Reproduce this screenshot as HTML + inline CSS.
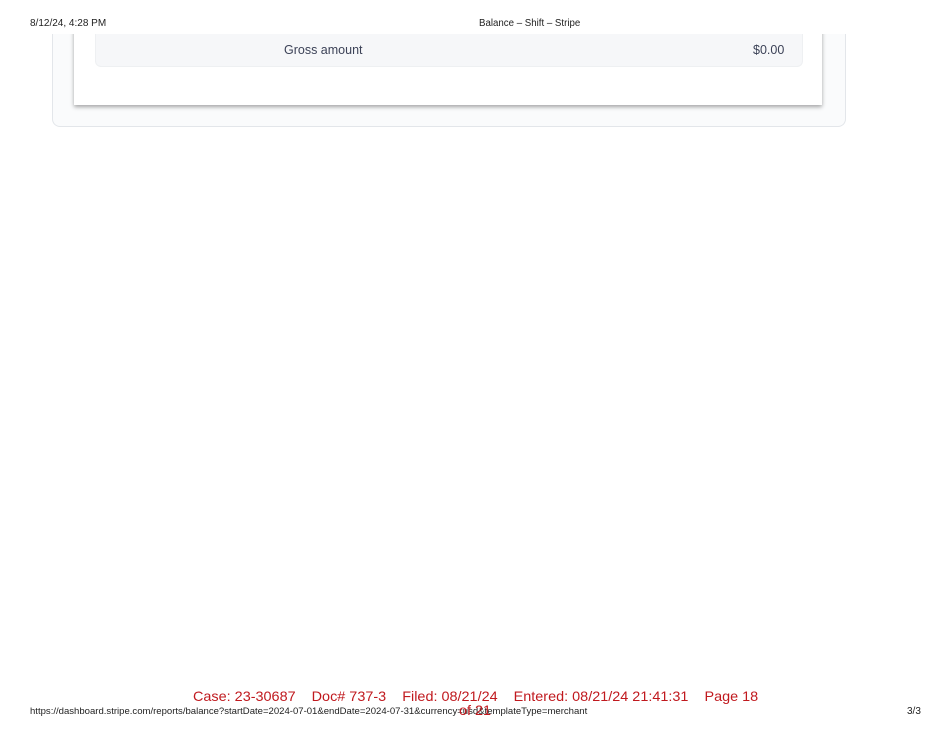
<!DOCTYPE html>
<html><head><meta charset="utf-8"><style>
html,body{margin:0;padding:0;background:#fff;width:950px;height:734px;overflow:hidden;position:relative;font-family:"Liberation Sans",sans-serif}
.t{position:absolute;font-size:10px;color:#222;white-space:nowrap}
.outer{position:absolute;left:52px;top:20px;width:792px;height:106px;border:1px solid #e3e6ea;border-top:none;border-radius:0 0 8px 8px;background:#fafbfc}
.card{position:absolute;left:74px;top:20px;width:748px;height:85px;background:#fff;box-shadow:0 2px 4px rgba(0,0,0,.35)}
.row{position:absolute;left:95px;top:34px;width:706px;height:32px;background:#f6f7f9;border-radius:0 0 6px 6px;border:1px solid #eef0f2;border-top:none}
.hdr{position:absolute;left:0;top:0;width:950px;height:34px;background:#fff}
.red{position:absolute;top:688px;left:193px;color:#c0191e;font-size:14px;white-space:nowrap;transform-origin:0 0;transform:scaleX(1.03)}
</style></head><body>
<div class="outer"></div>
<div class="card"></div>
<div class="row"></div>
<div class="hdr"></div>
<div class="t" style="left:30px;top:18px">8/12/24, 4:28 PM</div>
<div class="t" style="left:479px;top:18px;font-size:9.7px">Balance – Shift – Stripe</div>
<div class="t" style="left:284px;top:43px;font-size:12.5px;color:#3c4257">Gross amount</div>
<div class="t" style="left:753px;top:43px;font-size:12.5px;color:#3c4257">$0.00</div>
<div class="red">Case: 23-30687&nbsp;&nbsp;&nbsp; Doc# 737-3&nbsp;&nbsp;&nbsp; Filed: 08/21/24&nbsp;&nbsp;&nbsp; Entered: 08/21/24 21:41:31&nbsp;&nbsp;&nbsp; Page 18</div>
<div class="t" style="left:30px;top:706px;font-size:9.55px">https://dashboard.stripe.com/reports/balance?startDate=2024-07-01&amp;endDate=2024-07-31&amp;currency=usd&amp;templateType=merchant</div>
<div class="red" style="left:459px;top:702px">of 21</div>
<div class="t" style="left:907px;top:706px">3/3</div>
</body></html>
